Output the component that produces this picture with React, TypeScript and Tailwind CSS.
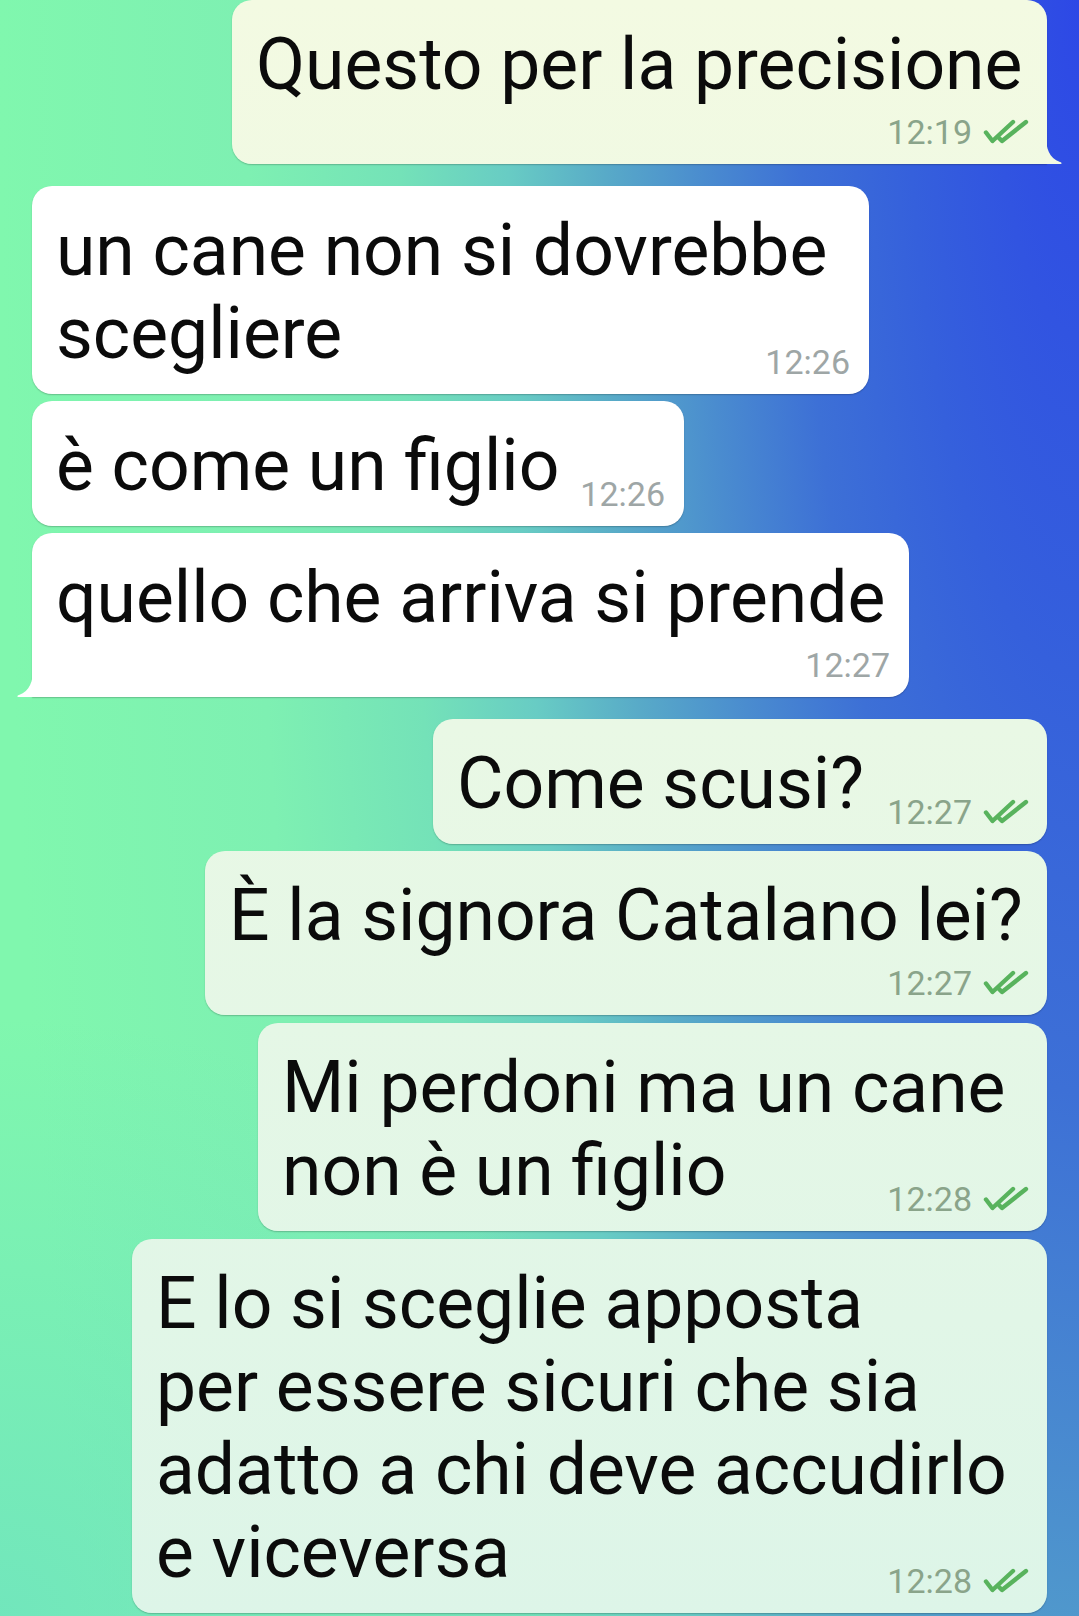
import React from 'react';

type Msg = {
  id: number;
  out: boolean;
  lines: string[];
  time: string;
  inline: boolean;
  box: string; // width + spacing above
  tail?: 'right' | 'left';
};

const messages: Msg[] = [
  { id: 1, out: true, lines: ['Questo per la precisione'], time: '12:19', inline: false, box: 'w-[815px] mt-0', tail: 'right' },
  { id: 2, out: false, lines: ['un cane non si dovrebbe', 'scegliere'], time: '12:26', inline: true, box: 'w-[837px] mt-[22px]' },
  { id: 3, out: false, lines: ['è come un figlio'], time: '12:26', inline: true, box: 'w-[652px] mt-[7px]' },
  { id: 4, out: false, lines: ['quello che arriva si prende'], time: '12:27', inline: false, box: 'w-[877px] mt-[7px]', tail: 'left' },
  { id: 5, out: true, lines: ['Come scusi?'], time: '12:27', inline: true, box: 'w-[614px] mt-[22px]' },
  { id: 6, out: true, lines: ['È la signora Catalano lei?'], time: '12:27', inline: false, box: 'w-[842px] mt-[7px]' },
  { id: 7, out: true, lines: ['Mi perdoni ma un cane', 'non è un figlio'], time: '12:28', inline: true, box: 'w-[789px] mt-[8px]' },
  {
    id: 8,
    out: true,
    lines: ['E lo si sceglie apposta', 'per essere sicuri che sia', 'adatto a chi deve accudirlo', 'e viceversa'],
    time: '12:28',
    inline: true,
    box: 'w-[915px] mt-[8px]',
  },
];

// double tick, read receipt
const Ticks = () => (
  <svg width="46" height="26" viewBox="0 0 46 26" fill="none" stroke="#58b35d" strokeWidth="4.4" strokeLinecap="round" strokeLinejoin="round">
    <path d="M3 13.5 L9.5 22 L30 3" />
    <path d="M16 19 L19 22 L43 3" />
  </svg>
);

const Bubble = ({ m }: { m: Msg }) => {
  const side = m.out
    ? 'self-end bg-[linear-gradient(to_bottom,#f3fae2_0%,#e9f8e5_45%,#ddf5e8_100%)] bg-fixed'
    : 'self-start bg-white';
  const corners = m.tail === 'right' ? 'rounded-[20px] rounded-br-none' : m.tail === 'left' ? 'rounded-[20px] rounded-bl-none' : 'rounded-[20px]';

  return (
    <div className={`relative ${m.box} ${side} ${corners} pl-[24px] pt-[23px] ${m.inline ? 'pb-[19px]' : 'pb-[58px]'} shadow-[0_1px_1.5px_rgba(0,0,0,0.22)]`}>
      <p className="whitespace-nowrap text-[71.4px] leading-[83px] text-[#0b0b0b]">
        {m.lines.map((l, i) => (
          <React.Fragment key={i}>
            {i > 0 && <br />}
            {l}
          </React.Fragment>
        ))}
      </p>

      <div className={`absolute bottom-[15px] flex items-center gap-[11px] ${m.out ? 'right-[18px] text-[#8aa48a]' : 'right-[19px] text-[#9ea6a6]'}`}>
        <span className="text-[34px] leading-none">{m.time}</span>
        {m.out && <Ticks />}
      </div>

      {m.tail === 'right' && (
        <svg className="absolute bottom-0 right-[-16px]" width="17" height="28" viewBox="0 0 17 28">
          <path d="M0 0 C0 12 3 22 14 26 C16.5 26.8 16 28 14 28 L0 28 Z" fill="#f2f9e3" />
        </svg>
      )}
      {m.tail === 'left' && (
        <svg className="absolute bottom-0 left-[-17px]" width="18" height="28" viewBox="0 0 18 28">
          <path d="M18 0 C18 12 15 22 4 26 C1.5 26.8 2 28 4 28 L18 28 Z" fill="#ffffff" />
        </svg>
      )}
    </div>
  );
};

export default function App() {
  return (
    <div className="relative h-[1616px] w-full overflow-hidden bg-[radial-gradient(700px_600px_at_0%_100%,rgba(96,210,205,0.45),transparent),radial-gradient(1080px_4200px_at_100%_0%,#2d48e6_0%,#3560dc_16%,#3d70d6_26%,#4a8ccf_35%,#58aac8_44%,#68ccc4_53%,#74e2b8_63%,#7ef0b2_77%,#80f7ae_100%)] font-[Roboto,sans-serif]">
      <div className="flex flex-col px-[32px]">
        {messages.map((m) => (
          <Bubble key={m.id} m={m} />
        ))}
      </div>
    </div>
  );
}
